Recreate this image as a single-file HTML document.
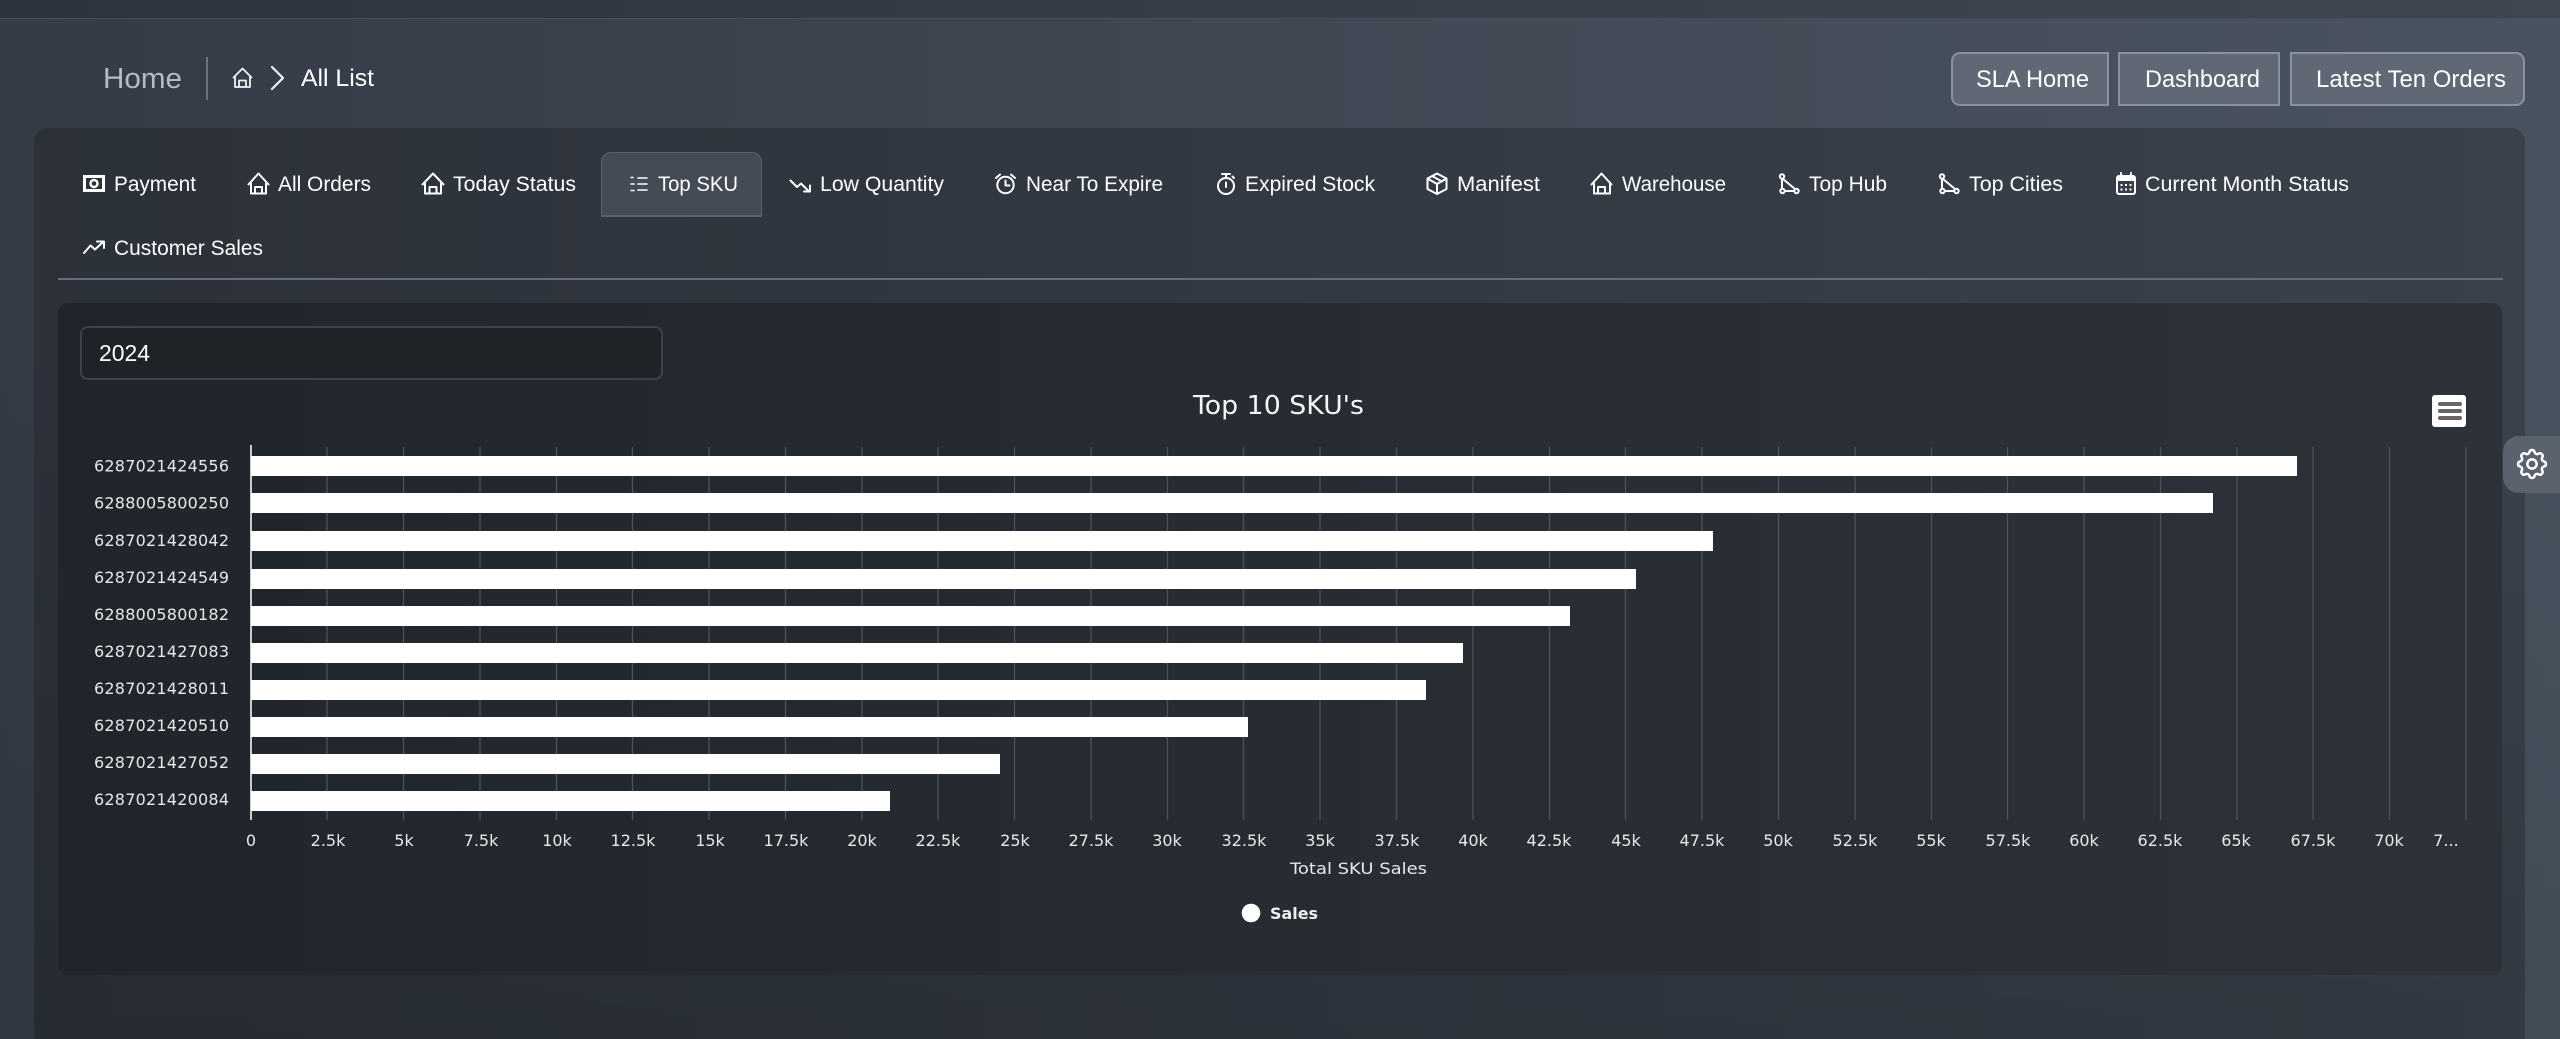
<!DOCTYPE html>
<html lang="en">
<head>
<meta charset="utf-8">
<title>Top SKU</title>
<style>
html,body{margin:0;padding:0;width:2560px;height:1039px;overflow:hidden;background:#39414c}
body{position:relative}
.bg,.strip,.card,.inner,.sel,.tab,.btn,.cog,svg{position:absolute;box-sizing:border-box}
svg{display:block}
.bg{left:0;top:0;width:2560px;height:1039px;background:linear-gradient(180deg,rgba(0,0,0,0) 30%,rgba(10,25,25,.12) 100%),linear-gradient(90deg,#343b46 0%,#3f4753 45%,#49535f 100%)}
.strip{left:0;top:0;width:2560px;height:19px;background:linear-gradient(90deg,#2e343e,#3f4753);border-bottom:1px solid #474e5a}
.card{left:34px;top:128px;width:2491px;height:911px;border-radius:14px 14px 0 0;background:linear-gradient(180deg,rgba(0,0,0,0) 30%,rgba(0,0,0,.13) 100%),linear-gradient(90deg,#2c3139 0%,#333a44 55%,#39414b 100%)}
.inner{left:58px;top:303px;width:2444px;height:672px;border-radius:10px;background:linear-gradient(90deg,#20252b 0%,#272c33 50%,#2d3239 100%)}
.sel{left:80px;top:326px;width:583px;height:54px;border-radius:8px;background:#1f2327;border:2px solid #3d434b}
.tab{left:601px;top:152px;width:161px;height:65px;border-radius:10px 10px 0 0;background:#444b56;border:1px solid #5a626d;border-bottom:2px solid #5a626d}
.btn{top:52px;height:54px;background:#5f6874;border:2px solid #8a929d}
.cog{left:2503px;top:436px;width:57px;height:57px;border-radius:16px 0 0 16px;background:#5a626d}
text{font-family:"Liberation Sans",sans-serif;fill:#fff}
.c text,text.c{font-family:"DejaVu Sans",sans-serif;font-size:16px;fill:#e8e8e8}
</style>
</head>
<body>
<div class="bg"></div>
<div class="strip"></div>
<div class="card"></div>
<div class="inner"></div>
<div class="sel"></div>
<div class="tab"></div>
<div class="btn" style="left:1951px;width:158px;border-radius:9px 0 0 9px"></div>
<div class="btn" style="left:2118px;width:162px"></div>
<div class="btn" style="left:2290px;width:235px;border-radius:0 9px 9px 0"></div>
<div class="cog"></div>
<svg width="2560" height="1039" viewBox="0 0 2560 1039" style="left:0;top:0">
<!-- header -->
<text x="103" y="88" font-size="29" textLength="79" lengthAdjust="spacingAndGlyphs" style="fill:#b6bbc3">Home</text>
<rect x="206" y="57" width="2" height="43" fill="#6c737e"/>
<g fill="none" stroke="#f2f2f2" stroke-width="1.8" stroke-linejoin="round" stroke-linecap="round">
<path d="M235 76.5V87h15V76.500M233.500 77.500L242.500 68.500L251.500 77.500M239 87v-6.500h7V87"/>
<path d="M272 67L283 78L272 89" stroke-width="2.200"/>
</g>
<text x="301" y="86" font-size="24" textLength="73" lengthAdjust="spacingAndGlyphs">All List</text>
<text x="1976" y="87" font-size="24" textLength="113" lengthAdjust="spacingAndGlyphs">SLA Home</text>
<text x="2145" y="87" font-size="24" textLength="115" lengthAdjust="spacingAndGlyphs">Dashboard</text>
<text x="2316" y="87" font-size="24" textLength="190" lengthAdjust="spacingAndGlyphs">Latest Ten Orders</text>

<!-- tabs text -->
<g font-size="21">
<text x="114" y="191" textLength="82" lengthAdjust="spacingAndGlyphs">Payment</text>
<text x="278" y="191" textLength="93" lengthAdjust="spacingAndGlyphs">All Orders</text>
<text x="453" y="191" textLength="123" lengthAdjust="spacingAndGlyphs">Today Status</text>
<text x="658" y="191" textLength="80" lengthAdjust="spacingAndGlyphs">Top SKU</text>
<text x="820" y="191" textLength="124" lengthAdjust="spacingAndGlyphs">Low Quantity</text>
<text x="1026" y="191" textLength="137" lengthAdjust="spacingAndGlyphs">Near To Expire</text>
<text x="1245" y="191" textLength="130" lengthAdjust="spacingAndGlyphs">Expired Stock</text>
<text x="1457" y="191" textLength="83" lengthAdjust="spacingAndGlyphs">Manifest</text>
<text x="1622" y="191" textLength="104" lengthAdjust="spacingAndGlyphs">Warehouse</text>
<text x="1809" y="191" textLength="78" lengthAdjust="spacingAndGlyphs">Top Hub</text>
<text x="1969" y="191" textLength="94" lengthAdjust="spacingAndGlyphs">Top Cities</text>
<text x="2145" y="191" textLength="204" lengthAdjust="spacingAndGlyphs">Current Month Status</text>
<text x="114" y="255" textLength="149" lengthAdjust="spacingAndGlyphs">Customer Sales</text>
</g>
<rect x="58" y="278" width="2445" height="2" fill="#666d78"/>

<!-- tab icons -->
<g fill="none" stroke="#fff" stroke-width="2" stroke-linejoin="round" stroke-linecap="round">
<rect x="84.500" y="176.500" width="19" height="14" stroke-width="3" stroke-linejoin="miter"/>
<circle cx="94" cy="183.500" r="3.500" stroke-width="2.400"/>
<path d="M251 183.500V193.500H266V183.500M248.500 184.500L258.500 173.500L268.500 184.500M255 193.500V187H262V193.500"/>
<path d="M425 183.500V193.500H441V183.500M422.500 184.500L433 173.500L443.500 184.500M429.500 193.500V187H436.500V193.500"/>
<path d="M638 178H647M638 184H647M638 190H647M631 177.500H633M631 184H634M631 190.500H634" stroke-width="1.600"/>
<path d="M790.500 180.500L797 187L801 183.500L808.500 191M810 185.500V191.500H804"/>
<circle cx="1005.500" cy="185" r="8.200"/>
<path d="M1005.500 180.500V185.500H1009.500M996 178L1000 174.500M1015 178L1011 174.500"/>
<circle cx="1226" cy="186" r="8"/>
<path d="M1222 174H1230M1226 174V178M1226 182.500V187M1234 178L1232.500 176.500"/>
<path d="M1437 173.500L1446.500 178.500V189L1437 194L1427.500 189V178.500ZM1427.500 178.500L1437 184L1446.500 178.500M1437 184V194M1432 176L1442 181.500"/>
<path d="M1594 183.500V193.500H1610V183.500M1591.500 184.500L1601.500 173.500L1611.500 184.500M1598 193.500V187H1605V193.500"/>
<circle cx="1782" cy="176.500" r="2.200"/><circle cx="1782.500" cy="191" r="2.200"/><circle cx="1796.500" cy="191" r="2.200"/>
<path d="M1783 179L1795 189M1782 179V188.800M1784.700 191H1794.300"/>
<circle cx="1942" cy="176.500" r="2.200"/><circle cx="1942.500" cy="191" r="2.200"/><circle cx="1956.500" cy="191" r="2.200"/>
<path d="M1943 179L1955 189M1942 179V188.800M1944.700 191H1954.300"/>
<rect x="2117" y="176" width="18" height="18" rx="2"/>
<path d="M2121 173V177M2131 173V177"/>
<path d="M84 253L90.500 245.500L95 249.500L103.500 241.500M97 241.500H104V248"/>
</g>
<rect x="2117" y="176" width="18" height="5" fill="#fff"/>
<path d="M2120.500 184h2v2h-2zM2125 184h2v2h-2zM2129.500 184h2v2h-2zM2120.500 188.500h2v2h-2zM2125 188.500h2v2h-2zM2129.500 188.500h2v2h-2z" fill="#fff"/>

<!-- select -->
<text x="99" y="361" font-size="23" textLength="51" lengthAdjust="spacingAndGlyphs">2024</text>

<!-- chart -->
<text x="1193" y="414" style="font-family:'DejaVu Sans',sans-serif;font-size:26px;fill:#f5f5f5" textLength="171" lengthAdjust="spacingAndGlyphs">Top 10 SKU's</text>

<path d="M327 447V820M403.500 447V820M480 447V820M556.500 447V820M632.500 447V820M709 447V820M785.500 447V820M862 447V820M938 447V820M1014.500 447V820M1091 447V820M1167.500 447V820M1243.500 447V820M1320 447V820M1396.500 447V820M1473 447V820M1549.500 447V820M1625.500 447V820M1702 447V820M1778.500 447V820M1855 447V820M1931.500 447V820M2007.500 447V820M2084 447V820M2160.500 447V820M2237 447V820M2313 447V820M2389.500 447V820M2466 447V820" stroke="#4d525b" stroke-width="1.300" fill="none"/>
<rect x="250" y="445" width="2" height="375" fill="#c6cbd6"/>

<g fill="#fff">
<rect x="251" y="456" width="2046" height="20"/>
<rect x="251" y="493" width="1962" height="20"/>
<rect x="251" y="531" width="1462" height="20"/>
<rect x="251" y="569" width="1385" height="20"/>
<rect x="251" y="606" width="1319" height="20"/>
<rect x="251" y="643" width="1212" height="20"/>
<rect x="251" y="680" width="1175" height="20"/>
<rect x="251" y="717" width="997" height="20"/>
<rect x="251" y="754" width="749" height="20"/>
<rect x="251" y="791" width="639" height="20"/>
</g>

<g class="c">
<text x="94" y="471.500" textLength="135">6287021424556</text>
<text x="94" y="508.500" textLength="135">6288005800250</text>
<text x="94" y="546" textLength="135">6287021428042</text>
<text x="94" y="583" textLength="135">6287021424549</text>
<text x="94" y="620" textLength="135">6288005800182</text>
<text x="94" y="657" textLength="135">6287021427083</text>
<text x="94" y="694" textLength="135">6287021428011</text>
<text x="94" y="731" textLength="135">6287021420510</text>
<text x="94" y="768" textLength="135">6287021427052</text>
<text x="94" y="805" textLength="135">6287021420084</text>
</g>
<g class="c" text-anchor="middle">
<text x="251" y="846">0</text>
<text x="328" y="846">2.5k</text>
<text x="404" y="846">5k</text>
<text x="481" y="846">7.5k</text>
<text x="557" y="846">10k</text>
<text x="633" y="846">12.5k</text>
<text x="710" y="846">15k</text>
<text x="786" y="846">17.5k</text>
<text x="862" y="846">20k</text>
<text x="938" y="846">22.5k</text>
<text x="1015" y="846">25k</text>
<text x="1091" y="846">27.5k</text>
<text x="1167" y="846">30k</text>
<text x="1244" y="846">32.5k</text>
<text x="1320" y="846">35k</text>
<text x="1397" y="846">37.5k</text>
<text x="1473" y="846">40k</text>
<text x="1549" y="846">42.5k</text>
<text x="1626" y="846">45k</text>
<text x="1702" y="846">47.5k</text>
<text x="1778" y="846">50k</text>
<text x="1855" y="846">52.5k</text>
<text x="1931" y="846">55k</text>
<text x="2008" y="846">57.5k</text>
<text x="2084" y="846">60k</text>
<text x="2160" y="846">62.5k</text>
<text x="2236" y="846">65k</text>
<text x="2313" y="846">67.5k</text>
<text x="2389" y="846">70k</text>
<text x="2446" y="846">7...</text>
</g>
<text class="c" x="1290" y="874" textLength="137" lengthAdjust="spacingAndGlyphs">Total SKU Sales</text>
<circle cx="1251" cy="913" r="9.300" fill="#fff"/>
<text x="1270" y="919" textLength="48" lengthAdjust="spacingAndGlyphs" style="font-family:'DejaVu Sans',sans-serif;font-size:16px;font-weight:700;fill:#eee">Sales</text>

<!-- menu button -->
<rect x="2432" y="395" width="34" height="32" rx="3" fill="#fff"/>
<path d="M2440 404H2460M2440 411H2460M2440 418H2460" stroke="#666" stroke-width="4" stroke-linecap="round" fill="none"/>

<!-- gear -->
<g transform="translate(2513.400 445.400) scale(1.550)" fill="none" stroke="#fff" stroke-width="1.600" stroke-linecap="round" stroke-linejoin="round">
<path d="M10.325 4.317c.426-1.756 2.924-1.756 3.35 0a1.724 1.724 0 0 0 2.573 1.066c1.543-.94 3.31.826 2.37 2.37a1.724 1.724 0 0 0 1.065 2.572c1.756.426 1.756 2.924 0 3.35a1.724 1.724 0 0 0-1.066 2.573c.94 1.543-.826 3.31-2.37 2.37a1.724 1.724 0 0 0-2.572 1.065c-.426 1.756-2.924 1.756-3.35 0a1.724 1.724 0 0 0-2.573-1.066c-1.543.94-3.31-.826-2.37-2.37a1.724 1.724 0 0 0-1.065-2.572c-1.756-.426-1.756-2.924 0-3.35a1.724 1.724 0 0 0 1.066-2.573c-.94-1.543.826-3.31 2.37-2.37c1 .608 2.296.07 2.572-1.065z"/>
<circle cx="12" cy="12" r="3"/>
</g>
</svg>
</body>
</html>
